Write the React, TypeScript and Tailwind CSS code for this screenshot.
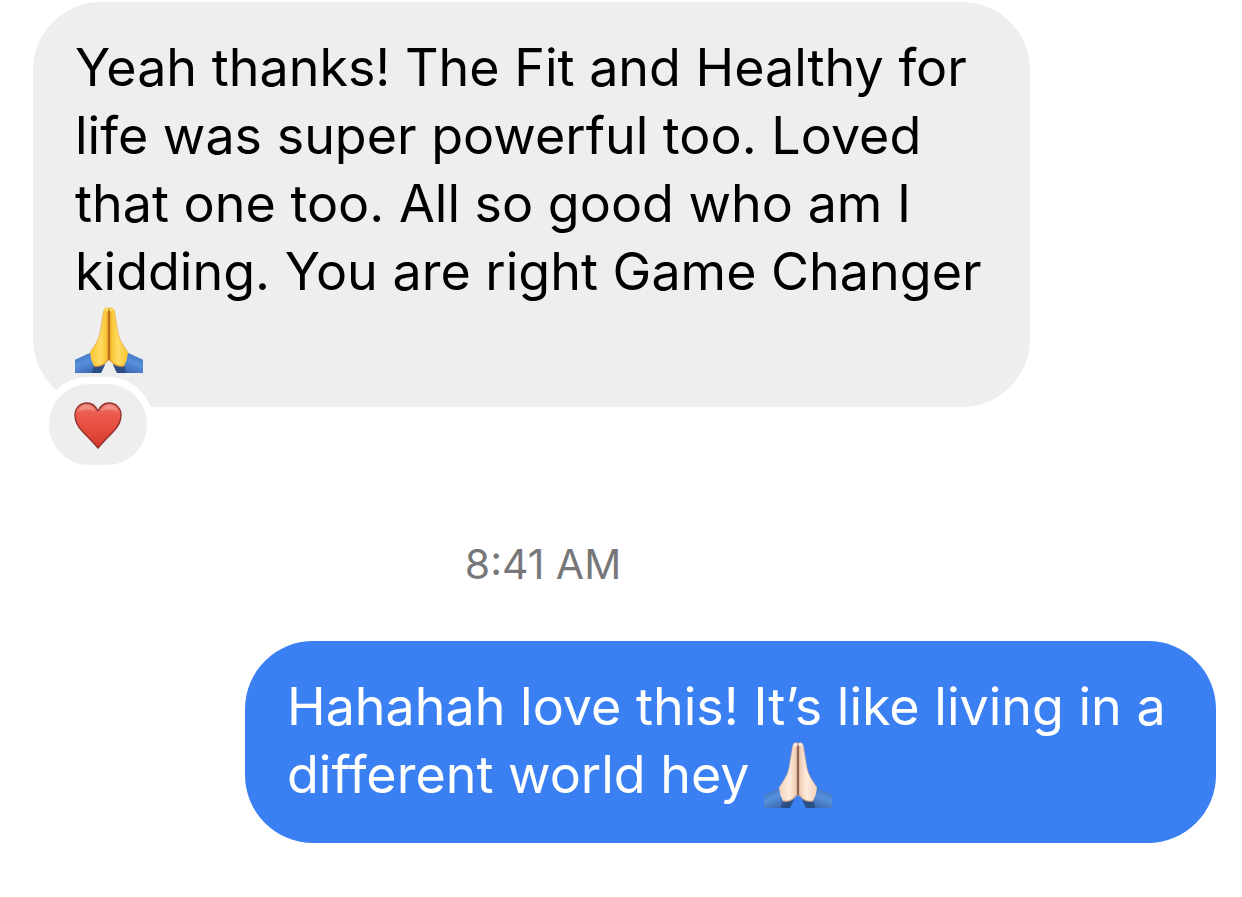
import React from 'react';

interface Skin {
  light: string;
  base: string;
  shade: string;
  line: string;
}

interface PrayingHandsProps {
  id: string;
  skin: Skin;
  className?: string;
}

const yellowSkin: Skin = { light: '#ffdc63', base: '#f9c534', shade: '#dd9228', line: '#a8591a' };
const paleSkin: Skin = { light: '#fdebdc', base: '#f3d3bd', shade: '#c99c82', line: '#6e4a3c' };

const PrayingHands: React.FC<PrayingHandsProps> = ({ id, skin, className = '' }) => {
  const half = (
    <>
      <path d="M48 188 L94 167 L138 203 L126 228 L48 228 Z" fill={`url(#${id}-sleeve)`} />
      <path d="M104 206 L138 202 L126 228 L98 228 Z" fill="#22406f" opacity="0.65" />
      <path
        d="M150 33 Q137 28 134 41 L123 108 Q120 124 111 139 L93 167 Q95 190 105 207 Q120 210 132 203 L150 187 Z"
        fill={`url(#${id}-skin)`}
      />
      <path d="M134 41 L123 108 Q120 124 111 139 L93 167" fill="none" stroke={skin.shade} strokeWidth="2" opacity="0.8" />
      <path d="M105 207 Q120 210 132 203 L150 187" fill="none" stroke={skin.shade} strokeWidth="4" opacity="0.8" />
      <path d="M138 38 Q140 32 148 34 L148 44 Q142 40 138 43 Z" fill={skin.light} />
    </>
  );

  return (
    <svg viewBox="48 27 204 204" role="img" aria-label="Folded hands" className={className}>
      <defs>
        <linearGradient id={`${id}-skin`} x1="0" y1="0" x2="1" y2="0">
          <stop offset="0" stopColor={skin.base} />
          <stop offset="0.55" stopColor={skin.light} />
          <stop offset="0.85" stopColor={skin.base} />
          <stop offset="1" stopColor={skin.shade} />
        </linearGradient>
        <linearGradient id={`${id}-sleeve`} x1="0" y1="0" x2="0.6" y2="1">
          <stop offset="0" stopColor="#3868b4" />
          <stop offset="0.5" stopColor="#5690dc" />
          <stop offset="1" stopColor="#3a66ac" />
        </linearGradient>
      </defs>
      <g>{half}</g>
      <g transform="translate(300 0) scale(-1 1)">{half}</g>
      <path d="M150 42 L150 187" stroke={skin.line} strokeWidth="4" strokeLinecap="round" />
    </svg>
  );
};

const Heart = () => (
  <svg viewBox="0 0 48 48" role="img" aria-label="Red heart" className="h-12 w-12">
    <defs>
      <linearGradient id="heart-fill" x1="0" y1="0" x2="0" y2="1">
        <stop offset="0" stopColor="#ee7c72" />
        <stop offset="0.25" stopColor="#ea5a4e" />
        <stop offset="0.6" stopColor="#e64a3d" />
        <stop offset="1" stopColor="#d23a2c" />
      </linearGradient>
    </defs>
    <path
      d="M24 10 C21 4 17 2 13 2 C6 2 1 7 1 14 C1 21 4 26 9 31 C14 36 19 41 24 47 C29 41 34 36 39 31 C44 26 47 21 47 14 C47 7 42 2 35 2 C31 2 27 4 24 10 Z"
      fill="url(#heart-fill)"
      stroke="#8f322c"
      strokeWidth="1.4"
      strokeLinejoin="round"
    />
    <path d="M4 11 C6 5 9 4 13 4 C17 4 19 6 21 10 C15 8 9 8 4 11 Z" fill="#f6aaa2" opacity="0.5" />
    <path d="M44 11 C42 5 39 4 35 4 C31 4 29 6 27 10 C33 8 39 8 44 11 Z" fill="#f6aaa2" opacity="0.5" />
  </svg>
);

export default function App() {
  return (
    <main className="flex min-h-screen flex-col bg-white pt-[2px] pr-[26px] pb-12 pl-[33px] font-['Inter',sans-serif]">
      {/* Received message */}
      <div className="relative max-w-[997px] self-start rounded-[68px] bg-[#eeeeee] px-[42px] pt-8 pb-[33px]">
        <p className="text-[52px] leading-[68px] text-black">
          Yeah thanks! The Fit and Healthy for life was super powerful too. Loved that one too. All so good who am I
          kidding. You are right Game Changer{' '}
          <PrayingHands id="received" skin={yellowSkin} className="inline-block h-[68px] w-[68px] align-bottom" />
        </p>
        <button
          type="button"
          aria-label="Heart reaction"
          className="absolute -bottom-[58px] left-4 flex h-[81px] w-[98px] items-center justify-center rounded-[40px] bg-[#eeeeee] ring-7 ring-white"
        >
          <Heart />
        </button>
      </div>

      <time className="mt-[133px] pr-[163px] text-center text-[41px] leading-[48px] text-[#77777a]">8:41 AM</time>

      {/* Sent message */}
      <div className="mt-[53px] max-w-[971px] self-end rounded-[68px] bg-[#3b80f3] px-[42px] pt-8 pb-[34px]">
        <p className="text-[52px] leading-[68px] text-white">
          Hahahah love this! It’s like living in a different world hey{' '}
          <PrayingHands id="sent" skin={paleSkin} className="inline-block h-[68px] w-[68px] align-bottom" />
        </p>
      </div>
    </main>
  );
}
